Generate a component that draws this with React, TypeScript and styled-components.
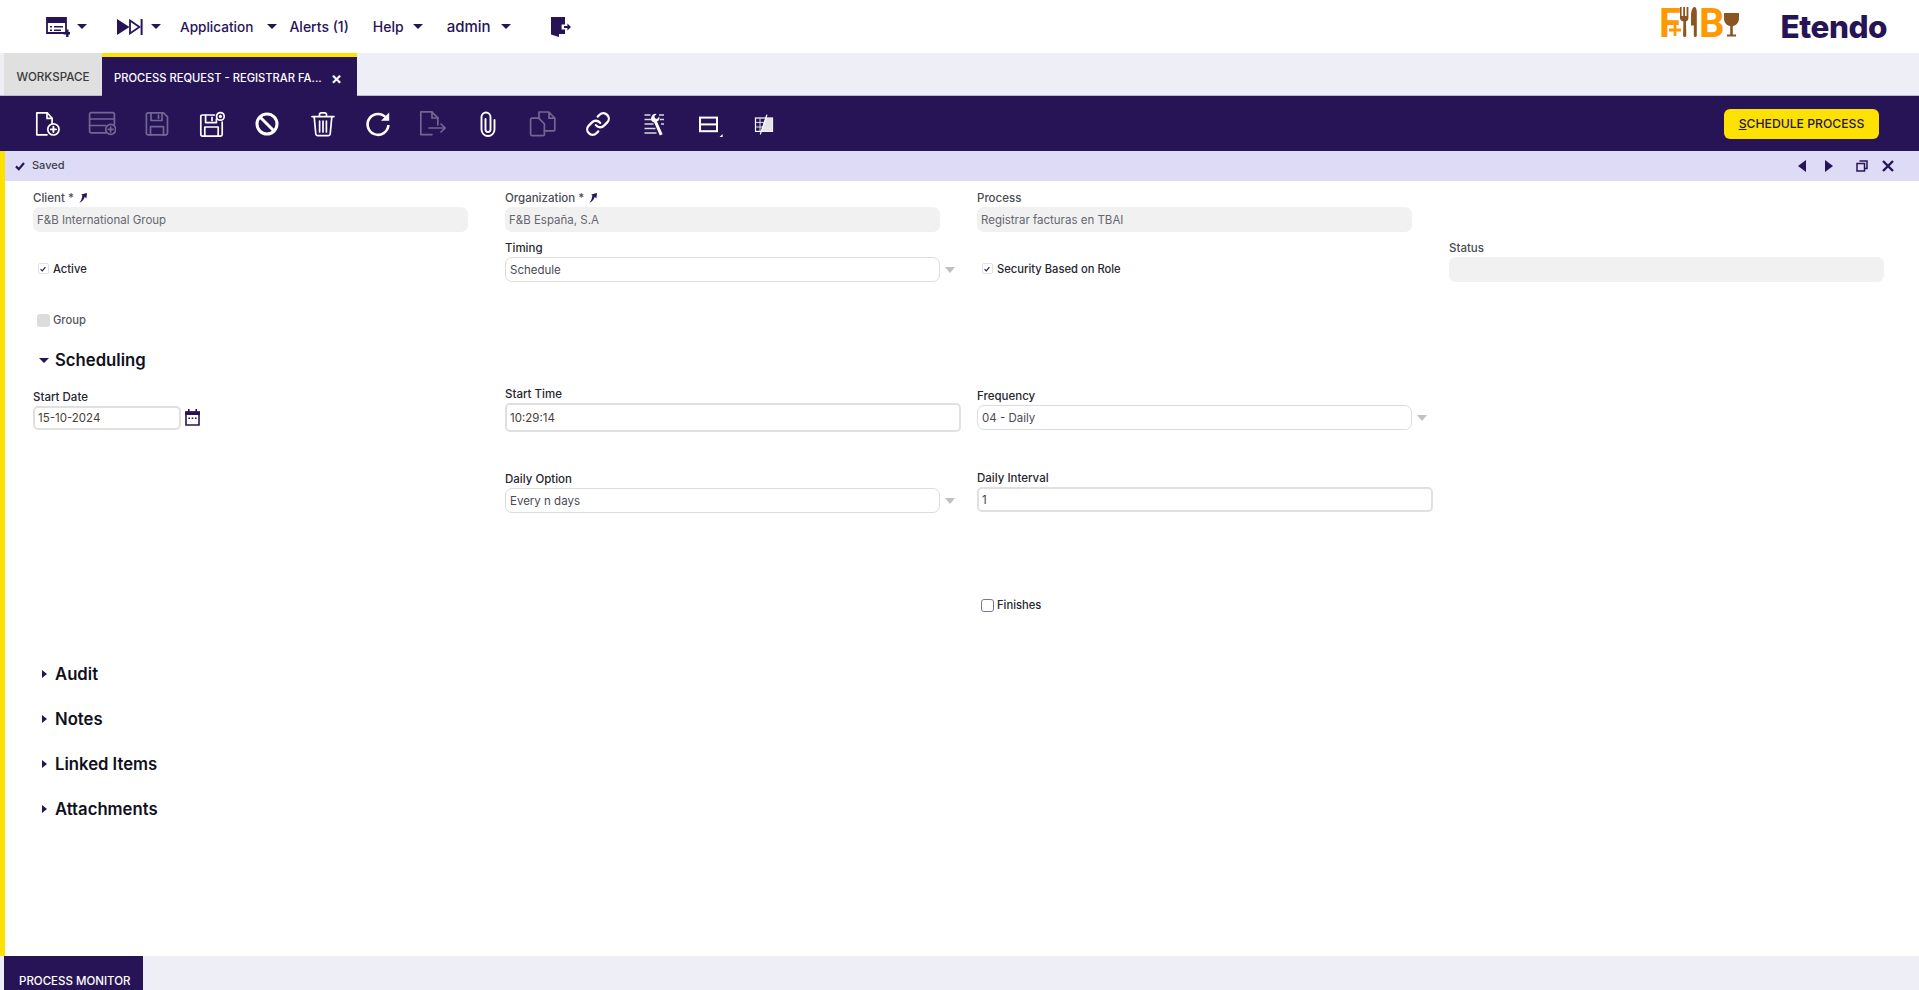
import { ReactNode } from "react";
import styled, { createGlobalStyle } from "styled-components";
import { Link } from "lucide-react";

const NAVY = "#271457";

const GlobalStyle = createGlobalStyle`
  html, body {
    margin: 0;
    padding: 0;
    background: #fff;
    font-family: Inter, "Noto Sans", sans-serif;
  }
  * { box-sizing: border-box; }
`;

/* ---------- drawings ---------- */

function FormMenuIcon() {
  return (
    <svg width="24" height="20" viewBox="0 0 24 20">
      <path d="M1 1h19v15H1z" fill="none" stroke={NAVY} strokeWidth="1.8" />
      <path d="M1 0h19v6H1z" fill={NAVY} />
      <path d="M4 9h2v1.6H4zM8 9h9v1.6H8zM4 12.5h2v1.6H4zM8 12.5h7v1.6H8z" fill={NAVY} />
      <path d="M17.5 15h2.6v-2.6h2.4V15h1.5v2.4h-1.5v2.6h-2.4v-2.6h-2.6z" fill={NAVY} />
    </svg>
  );
}

function SkipIcon() {
  return (
    <svg width="26" height="16" viewBox="0 0 26 16">
      <path d="M0 0l12.5 8L0 16z" fill={NAVY} />
      <path d="M13 1.6L22.4 8 13 14.4z" fill="none" stroke={NAVY} strokeWidth="1.8" />
      <path d="M23.6 0h2v16h-2z" fill={NAVY} />
    </svg>
  );
}

function LogoutIcon() {
  return (
    <svg width="20" height="20" viewBox="0 0 20 20">
      <path d="M0 0h14v7.6h-3.4v4.8H14V17H8v3l-8-2.4z" fill={NAVY} />
      <path d="M13 9h3.4V6.4L20 10l-3.6 3.6V11H13z" fill={NAVY} />
    </svg>
  );
}

const strokeProps = {
  fill: "none",
  stroke: "#fff",
  strokeWidth: 1.7,
  strokeLinejoin: "round" as const,
  strokeLinecap: "round" as const,
};

function ToolSvg({ children, w = 28 }: { children: ReactNode; w?: number }) {
  return (
    <svg width={w} height="28" viewBox={`0 0 ${w} 28`} {...strokeProps}>
      {children}
    </svg>
  );
}

const NewDocIcon = () => (
  <ToolSvg>
    <path d="M14 24.8H3.8V2.8h10.4l4.9 5.4v5.2" />
    <path d="M14 3v5.4h5" />
    <circle cx="20.4" cy="19.4" r="5.6" />
    <path d="M20.4 16.8v5.2M17.8 19.4H23" strokeWidth="1.9" />
  </ToolSvg>
);

const NewRowIcon = () => (
  <ToolSvg>
    <path d="M18 22.8H3.2a1.6 1.6 0 0 1-1.6-1.6V4.2a1.6 1.6 0 0 1 1.6-1.6h21.5A1.6 1.6 0 0 1 26.4 4.2v10" />
    <path d="M1.6 9h24.8M1.6 15.5h16" />
    <circle cx="22.7" cy="19.4" r="5" />
    <path d="M22.7 17v4.8M20.3 19.4h4.8" />
  </ToolSvg>
);

const SaveIcon = () => (
  <ToolSvg>
    <path d="M5 2.8h15.5l4 4v16.4a1.6 1.6 0 0 1-1.6 1.6H5a1.6 1.6 0 0 1-1.6-1.6V4.4A1.6 1.6 0 0 1 5 2.8z" />
    <path d="M8 3v7.5h11V3M7.5 25v-8.4h13V25M15.5 5.2v3" />
  </ToolSvg>
);

const SaveCloseIcon = () => (
  <ToolSvg>
    <path d="M16.5 5H4.4a1.6 1.6 0 0 0-1.6 1.6v18a1.6 1.6 0 0 0 1.6 1.6h18.2a1.6 1.6 0 0 0 1.6-1.6V12" />
    <path d="M7.6 5.2v7.4h10.8V9M6.8 26v-9h13.4v9M14 7.4v3" />
    <circle cx="22.4" cy="6.4" r="3.8" />
    <circle cx="22.4" cy="6.4" r="0.8" fill="#fff" />
  </ToolSvg>
);

const CancelIcon = () => (
  <ToolSvg>
    <circle cx="14" cy="14" r="10" strokeWidth="3" />
    <path d="M7 7l14 14" strokeWidth="3" strokeLinecap="butt" />
  </ToolSvg>
);

const TrashIcon = () => (
  <ToolSvg>
    <path d="M3 6.6h22M10.5 6.4V4.6A1.8 1.8 0 0 1 12.3 2.8h3.4a1.8 1.8 0 0 1 1.8 1.8v1.8" />
    <path d="M5.2 7l1.6 17a1.8 1.8 0 0 0 1.8 1.6h10.8a1.8 1.8 0 0 0 1.8-1.6L22.8 7" />
    <path d="M10.6 11v11M14 11v11M17.4 11v11" />
  </ToolSvg>
);

const RefreshIcon = () => (
  <ToolSvg>
    <path d="M22.4 8.2A10.4 10.4 0 1 0 24.4 15" strokeWidth="2.6" strokeLinecap="butt" />
    <path d="M25.2 2.6v8.2H17z" fill="#fff" stroke="none" />
  </ToolSvg>
);

const ExportIcon = () => (
  <ToolSvg>
    <path d="M13 24.6H1.8V1.8h11l6 6v7" />
    <path d="M13 2v6h6" />
    <path d="M10 18h16M22 14l4.2 4-4.2 4" />
  </ToolSvg>
);

const AttachIcon = () => (
  <ToolSvg>
    <path
      d="M20.5 10v9.5a6.5 6.5 0 0 1-13 0V7a4.5 4.5 0 0 1 9 0v12.5a2.5 2.5 0 0 1-5 0V9"
      strokeWidth="1.9"
    />
  </ToolSvg>
);

const CopyIcon = () => (
  <ToolSvg>
    <path d="M9 8.2h-6a1.4 1.4 0 0 0-1.4 1.4v14.6A1.4 1.4 0 0 0 3 25.6h11a1.4 1.4 0 0 0 1.4-1.4V14l-5.6-5.8z" />
    <path d="M10 2h9.8l6 6v11.4a1.4 1.4 0 0 1-1.4 1.4h-9M10 2v6.4M20 2.4v5.8h5.6" />
  </ToolSvg>
);

const ToolsIcon = () => (
  <ToolSvg>
    <path
      d="M4.5 5h6M4.5 9.5h8M4.5 14h9M4.5 18.5h11M4.5 23h12M19 5h5M20 9.5h4M21 14h3"
      stroke="#d8d8e2"
      strokeWidth="1.6"
      strokeLinecap="butt"
    />
    <path
      d="M11.6 6.6a4 4 0 0 1 5-2.6l-2.2 2.3.6 2 2 .6 2.2-2.3a4 4 0 0 1-2.2 5l5.6 12.6-2.8 1.2-5.6-12.8a4 4 0 0 1-2.6-6z"
      fill="#fff"
      stroke="none"
    />
  </ToolSvg>
);

const LayoutIcon = () => (
  <ToolSvg>
    <rect x="5" y="7.6" width="17" height="13.6" strokeWidth="2" strokeLinejoin="miter" />
    <path d="M6 14.4h15" strokeWidth="2" strokeLinecap="butt" />
    <path d="M27.6 27v-3L24.6 27z" fill="#fff" stroke="none" />
  </ToolSvg>
);

const MassIcon = () => (
  <ToolSvg>
    <rect x="5.5" y="8" width="17" height="13.4" strokeWidth="1.2" strokeLinejoin="miter" />
    <path d="M5.5 12.4h9M5.5 17h7.5M10 8v13" strokeWidth="1" strokeLinecap="butt" opacity="0.85" />
    <path d="M16.4 6l-5.4 15.4h11.5V8h-6z" fill="#e4e4e8" stroke="none" />
    <path d="M16.8 5L10.4 24" strokeWidth="1.2" />
  </ToolSvg>
);

function CheckMark({ size = 6, weight = 1.8 }: { size?: number; weight?: number }) {
  return (
    <svg width={size} height={size} viewBox="0 0 10 10">
      <path d="M1 5.4l2.8 2.8L9 2" fill="none" stroke={NAVY} strokeWidth={weight} />
    </svg>
  );
}

function PinIcon() {
  return (
    <svg width="9" height="10" viewBox="0 0 9 10">
      <path d="M9 0L8.4 5.4 6.7 3.8C6 6.6 4.4 8.6 1.4 9.8 3 8 4 6 4.4 2.6L3.2 1.4z" fill={NAVY} />
    </svg>
  );
}

function CalendarIcon() {
  return (
    <svg width="15" height="17" viewBox="0 0 15 17">
      <path d="M1 3h13v13H1z" fill="#fff" stroke={NAVY} strokeWidth="1.6" />
      <path d="M0 2.4h15V6H0zM3 0h1.6v3H3zM10.4 0H12v3h-1.6z" fill={NAVY} />
      <path d="M3.4 8.4h1.6V10H3.4zM6.7 8.4h1.6V10H6.7zM10 8.4h1.6V10H10z" fill={NAVY} />
    </svg>
  );
}

function ForkKnife() {
  return (
    <CutlerySvg width="17" height="30" viewBox="0 0 17 30">
      <path
        d="M0 0h1.6v9h1.6V0h1.8v9h1.6V0H8.4v11c0 1.8-1 3-2.4 3.4l.3 14a1.6 1.6 0 0 1-3.2 0l.3-14C1.2 14 0 12.8 0 11z"
        fill="#8a5522"
      />
      <path d="M14.4 0c1.6 0 2.4 2 2.4 5v23.4a1.5 1.5 0 0 1-3 0V18.6H11V9c0-5 1.6-9 3.4-9z" fill="#8a5522" />
    </CutlerySvg>
  );
}

function Glass() {
  return (
    <GlassSvg width="15" height="24" viewBox="0 0 15 24">
      <path
        d="M0 0h15v5c0 4.6-2.6 7.6-6.2 8v8.4H12V23.6H3v-2.2h3.2V13C2.6 12.6 0 9.6 0 5z"
        fill="#8a5522"
      />
    </GlassSvg>
  );
}

function LogoPlus() {
  return (
    <PlusMark width="12" height="12" viewBox="0 0 13 13">
      <path d="M5 0h3v5h5v3H8v5H5V8H0V5h5z" fill="#ff9900" />
    </PlusMark>
  );
}

/* ---------- page ---------- */

const toolIcons = [
  { key: "new", icon: <NewDocIcon /> },
  { key: "row", icon: <NewRowIcon />, off: true },
  { key: "save", icon: <SaveIcon />, off: true },
  { key: "saveclose", icon: <SaveCloseIcon /> },
  { key: "cancel", icon: <CancelIcon /> },
  { key: "delete", icon: <TrashIcon /> },
  { key: "refresh", icon: <RefreshIcon /> },
  { key: "export", icon: <ExportIcon />, off: true },
  { key: "attach", icon: <AttachIcon /> },
  { key: "copy", icon: <CopyIcon />, off: true },
  { key: "link", icon: <Link size={26} strokeWidth={2.1} color="#fff" /> },
  { key: "tools", icon: <ToolsIcon /> },
  { key: "layout", icon: <LayoutIcon /> },
  { key: "mass", icon: <MassIcon /> },
];

export default function App() {
  return (
    <Page>
      <GlobalStyle />
      <TopBar>
        <NavIcon $ml={46}>
          <FormMenuIcon />
        </NavIcon>
        <Caret $ml={7} />
        <NavIcon $ml={30}>
          <SkipIcon />
        </NavIcon>
        <Caret $ml={8} />
        <NavText $ml={19} $size={13.6}>Application</NavText>
        <Caret $ml={14} />
        <NavText $ml={12}>Alerts (1)</NavText>
        <NavText $ml={24}>Help</NavText>
        <Caret $ml={9} />
        <NavText $ml={24} $size={15}>admin</NavText>
        <Caret $ml={10} />
        <NavIcon $ml={40}>
          <LogoutIcon />
        </NavIcon>
        <Logos>
          <FoodLogo>
            <LogoLetter>F</LogoLetter>
            <LogoPlus />
            <ForkKnife />
            <LogoLetter>B</LogoLetter>
            <Glass />
          </FoodLogo>
          <Etendo>Etendo</Etendo>
        </Logos>
      </TopBar>

      <TabStrip>
        <WorkspaceTab>WORKSPACE</WorkspaceTab>
        <ActiveTab>
          <span>PROCESS REQUEST - REGISTRAR FA...</span>
          <TabClose>×</TabClose>
        </ActiveTab>
      </TabStrip>

      <Toolbar>
        {toolIcons.map((t) => (
          <ToolButton key={t.key} $off={t.off}>
            {t.icon}
          </ToolButton>
        ))}
        <ScheduleButton>
          <u>S</u>CHEDULE PROCESS
        </ScheduleButton>
      </Toolbar>

      <Main>
        <StatusBar>
          <CheckMark size={10} weight={2.2} />
          <StatusText>Saved</StatusText>
          <StatusControls>
            <Arrow $dir="left" />
            <Arrow $dir="right" />
            <svg width="12" height="12" viewBox="0 0 12 12">
              <path d="M3.5 1h7.5v7.5H8.5M1 3.5h7.5V11H1z" fill="none" stroke={NAVY} strokeWidth="1.5" />
            </svg>
            <svg width="12" height="12" viewBox="0 0 12 12">
              <path d="M1 1l10 10M11 1L1 11" fill="none" stroke={NAVY} strokeWidth="2.4" />
            </svg>
          </StatusControls>
        </StatusBar>

        <HeaderGrid>
          <Field>
            <Label $muted>
              Client * <PinIcon />
            </Label>
            <Input $kind="readonly">F&amp;B International Group</Input>
          </Field>
          <Field>
            <Label $muted>
              Organization * <PinIcon />
            </Label>
            <Input $kind="readonly">F&amp;B España, S.A</Input>
          </Field>
          <Field>
            <Label $muted>Process</Label>
            <Input $kind="readonly">Registrar facturas en TBAI</Input>
          </Field>
          <div />

          <CheckRow>
            <SmallBox>
              <CheckMark />
            </SmallBox>
            <CheckLabel>Active</CheckLabel>
          </CheckRow>
          <Field>
            <Label>Timing</Label>
            <SelectWrap>
              <Input $kind="select">Schedule</Input>
              <SelectArrow />
            </SelectWrap>
          </Field>
          <CheckRow>
            <SmallBox>
              <CheckMark />
            </SmallBox>
            <CheckLabel>Security Based on Role</CheckLabel>
          </CheckRow>
          <Field>
            <Label $muted>Status</Label>
            <Input $kind="readonly" />
          </Field>

          <CheckRow $h={20}>
            <GreyBox />
            <CheckLabel $muted>Group</CheckLabel>
          </CheckRow>
        </HeaderGrid>

        <SectionHead $first>
          <DownArrow />
          <SectionTitle>Scheduling</SectionTitle>
        </SectionHead>

        <ScheduleGrid>
          <Field>
            <Label>Start Date</Label>
            <DateWrap>
              <Input $kind="focus" $w={148} $h={24}>15-10-2024</Input>
              <CalendarIcon />
            </DateWrap>
          </Field>
          <Field>
            <Label>Start Time</Label>
            <Input $kind="focus" $w={456} $h={29}>10:29:14</Input>
          </Field>
          <Field>
            <Label>Frequency</Label>
            <SelectWrap>
              <Input $kind="select">04 - Daily</Input>
              <SelectArrow />
            </SelectWrap>
          </Field>
          <div />

          <div />
          <Field>
            <Label>Daily Option</Label>
            <SelectWrap>
              <Input $kind="select">Every n days</Input>
              <SelectArrow />
            </SelectWrap>
          </Field>
          <Field $lift>
            <Label>Daily Interval</Label>
            <Input $kind="focus" $w={456}>1</Input>
          </Field>
          <div />

          <div />
          <div />
          <CheckRow $h={20}>
            <OpenBox />
            <CheckLabel>Finishes</CheckLabel>
          </CheckRow>
        </ScheduleGrid>

        <Sections>
          {["Audit", "Notes", "Linked Items", "Attachments"].map((name) => (
            <SectionHead key={name}>
              <RightArrow />
              <SectionTitle>{name}</SectionTitle>
            </SectionHead>
          ))}
        </Sections>
      </Main>

      <BottomBar>
        <MonitorTab>PROCESS MONITOR</MonitorTab>
      </BottomBar>
    </Page>
  );
}

const Page = styled.div`
  height: 100vh;
  display: flex;
  flex-direction: column;
  overflow: hidden;
  color: ${NAVY};
`;

/* top bar */
const TopBar = styled.header`
  height: 53px;
  flex: none;
  display: flex;
  align-items: center;
  background: #fff;
`;

const NavIcon = styled.div<{ $ml: number }>`
  display: flex;
  margin-left: ${(p) => p.$ml}px;
`;

const NavText = styled.span<{ $ml: number; $size?: number }>`
  margin-left: ${(p) => p.$ml}px;
  font-size: ${(p) => p.$size ?? 14}px;
  font-weight: 500;
  color: ${NAVY};
`;

const Caret = styled.span<{ $ml: number }>`
  margin-left: ${(p) => p.$ml}px;
  width: 0;
  height: 0;
  border-left: 5px solid transparent;
  border-right: 5px solid transparent;
  border-top: 5px solid ${NAVY};
`;

const Logos = styled.div`
  margin-left: auto;
  padding-right: 32px;
  display: flex;
  align-items: center;
  gap: 42px;
`;

const FoodLogo = styled.div`
  position: relative;
  display: flex;
  align-items: flex-start;
  gap: 2px;
  height: 40px;
  margin-bottom: 6px;
`;

const LogoLetter = styled.span`
  margin-right: -3px;
  font-family: Roboto, sans-serif;
  font-weight: 700;
  font-size: 40px;
  line-height: 40px;
  color: #ff9900;
`;

const CutlerySvg = styled.svg`
  margin-top: 3.5px;
`;

const GlassSvg = styled.svg`
  margin-top: 9.5px;
`;

const PlusMark = styled.svg`
  position: absolute;
  left: 10px;
  top: 20.5px;
`;

const Etendo = styled.span`
  font-weight: 800;
  font-size: 31.5px;
  letter-spacing: -0.5px;
  color: ${NAVY};
`;

/* tabs */
const TabStrip = styled.nav`
  height: 43px;
  flex: none;
  display: flex;
  align-items: stretch;
  padding-left: 4px;
  background: #eeeef7;
  border-bottom: 1px solid #bdb9cc;
`;

const WorkspaceTab = styled.div`
  width: 98px;
  display: flex;
  align-items: center;
  justify-content: center;
  padding-top: 6px;
  background: #e0e0e0;
  font-size: 11.6px;
  font-weight: 500;
  color: #3a3a3a;
`;

const ActiveTab = styled.div`
  width: 255px;
  margin-bottom: -1px;
  display: flex;
  align-items: center;
  padding: 2px 0 0 12px;
  background: ${NAVY};
  border-top: 4px solid #fde100;
  font-size: 11.2px;
  font-weight: 500;
  color: #fff;
  white-space: nowrap;
`;

const TabClose = styled.span`
  margin-left: 9px;
  font-size: 17px;
  font-weight: 600;
`;

/* toolbar */
const Toolbar = styled.div`
  height: 55px;
  flex: none;
  display: flex;
  align-items: center;
  padding: 0 40px 0 19px;
  background: ${NAVY};
`;

const ToolButton = styled.div<{ $off?: boolean }>`
  width: 55.2px;
  display: flex;
  justify-content: center;
  align-items: center;
  opacity: ${(p) => (p.$off ? 0.35 : 1)};
`;

const ScheduleButton = styled.button`
  margin-left: auto;
  width: 155px;
  height: 30px;
  padding: 0;
  border: 0;
  border-radius: 6px;
  background: #fde100;
  font-family: inherit;
  font-size: 12.2px;
  font-weight: 500;
  color: ${NAVY};
`;

/* main form */
const Main = styled.main`
  flex: 1;
  min-height: 0;
  border-left: 5px solid #fde100;
  background: #fff;
`;

const StatusBar = styled.div`
  height: 30px;
  display: flex;
  align-items: center;
  gap: 7px;
  padding: 0 25px 0 10px;
  background: #dedbf7;
`;

const StatusText = styled.span`
  margin-bottom: 2px;
  font-size: 11px;
  font-weight: 500;
  color: #3c3c4a;
`;

const StatusControls = styled.div`
  margin-left: auto;
  display: flex;
  align-items: center;
  gap: 14px;
`;

const Arrow = styled.span<{ $dir: "left" | "right" }>`
  width: 0;
  height: 0;
  border-top: 6px solid transparent;
  border-bottom: 6px solid transparent;
  ${(p) =>
    p.$dir === "left"
      ? `border-right: 8px solid ${NAVY}; margin-right: 5px;`
      : `border-left: 8px solid ${NAVY}; margin-right: 9px;`}
`;

const HeaderGrid = styled.div`
  display: grid;
  grid-template-columns: repeat(4, 472px);
  grid-template-rows: 42px 42px 40px;
  row-gap: 8px;
  padding: 9px 0 0 28px;
  align-items: end;
`;

const ScheduleGrid = styled.div`
  display: grid;
  grid-template-columns: repeat(4, 472px);
  grid-template-rows: 46px 43px 64px;
  row-gap: 38px;
  padding: 11px 0 0 28px;
  align-items: end;
  & > :nth-child(-n + 4) {
    align-self: center;
  }
`;

const Field = styled.div<{ $lift?: boolean }>`
  display: flex;
  flex-direction: column;
  margin-bottom: ${(p) => (p.$lift ? 1 : 0)}px;
`;

const Label = styled.label<{ $muted?: boolean }>`
  height: 16px;
  margin-bottom: 1px;
  display: flex;
  align-items: center;
  gap: 4px;
  font-size: 11.5px;
  font-weight: 500;
  color: ${(p) => (p.$muted ? "#4a4a55" : "#26262e")};
`;

const Input = styled.div<{ $kind: "readonly" | "select" | "focus"; $w?: number; $h?: number }>`
  width: ${(p) => p.$w ?? 435}px;
  height: ${(p) => p.$h ?? 25}px;
  display: flex;
  align-items: center;
  font-size: 11.5px;
  ${(p) =>
    p.$kind === "readonly" &&
    `background: #f1f1f1; border-radius: 7px; padding-left: 4px; color: #666670;`}
  ${(p) =>
    p.$kind === "select" &&
    `background: #fff; border: 1px solid #dcdcdc; border-radius: 7px; padding-left: 4px; color: #4a4a55;`}
  ${(p) =>
    p.$kind === "focus" &&
    `background: #fff; border: 2px solid #e0e0e0; border-radius: 5px; padding-left: 3px; color: #4a4035;`}
`;

const SelectWrap = styled.div`
  display: flex;
  align-items: center;
  gap: 5px;
`;

const SelectArrow = styled.span`
  width: 0;
  height: 0;
  border-left: 5px solid transparent;
  border-right: 5px solid transparent;
  border-top: 6px solid #c0c0c4;
`;

const DateWrap = styled.div`
  display: flex;
  align-items: center;
  gap: 4px;
`;

const CheckRow = styled.div<{ $h?: number }>`
  height: ${(p) => p.$h ?? 27}px;
  display: grid;
  grid-template-columns: 20px auto;
  justify-items: start;
  align-items: center;
  & > :first-child {
    justify-self: center;
  }
`;

const SmallBox = styled.span`
  width: 11px;
  height: 11px;
  display: flex;
  align-items: center;
  justify-content: center;
  background: #fff;
  border: 1px solid #e2e2e6;
  border-radius: 2px;
`;

const GreyBox = styled.span`
  width: 13px;
  height: 13px;
  background: #dcdcdc;
  border-radius: 3px;
`;

const OpenBox = styled.span`
  width: 13px;
  height: 13px;
  background: #fff;
  border: 1px solid #7d72a8;
  border-radius: 3px;
`;

const CheckLabel = styled.span<{ $muted?: boolean }>`
  font-size: 11.2px;
  font-weight: 500;
  color: ${(p) => (p.$muted ? "#555560" : "#26262e")};
`;

const SectionHead = styled.div<{ $first?: boolean }>`
  height: 30px;
  margin: ${(p) => (p.$first ? "15px" : "0")} 0 0 28px;
  padding-left: 5px;
  display: grid;
  grid-template-columns: 12px auto;
  column-gap: 5px;
  justify-items: center;
  align-items: center;
`;

const SectionTitle = styled.h2`
  justify-self: start;
  margin: 0;
  font-size: 16.7px;
  font-weight: 600;
  color: #10101c;
`;

const DownArrow = styled.span`
  width: 0;
  height: 0;
  border-left: 5px solid transparent;
  border-right: 5px solid transparent;
  border-top: 5px solid ${NAVY};
`;

const RightArrow = styled.span`
  width: 0;
  height: 0;
  border-top: 4px solid transparent;
  border-bottom: 4px solid transparent;
  border-left: 5px solid ${NAVY};
`;

const Sections = styled.div`
  margin-top: 44px;
  display: flex;
  flex-direction: column;
  gap: 15px;
`;

/* bottom */
const BottomBar = styled.footer`
  height: 34px;
  flex: none;
  padding-left: 4px;
  background: #eeeef7;
`;

const MonitorTab = styled.div`
  width: 139px;
  height: 34px;
  padding: 17px 0 0 15px;
  background: ${NAVY};
  font-size: 11.5px;
  line-height: 16px;
  font-weight: 500;
  color: #fff;
  white-space: nowrap;
`;
